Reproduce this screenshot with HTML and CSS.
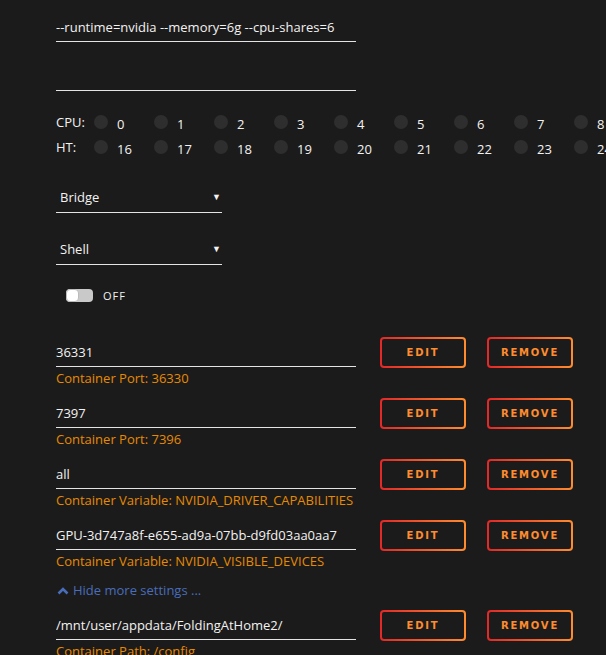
FILE: index.html
```html
<!DOCTYPE html>
<html lang="en">
<head>
    <meta charset="UTF-8">
    <meta name="viewport" content="width=device-width, initial-scale=1.0">
    <title>Edit Container</title>
    <link rel="stylesheet" href="styles.css">
</head>
<body>
    <div class="form">
        <input class="field" type="text" value="--runtime=nvidia --memory=6g --cpu-shares=6">
        <input class="field blank" type="text" value="">

        <div class="cpus">
            <div class="cpu-row">
                <span class="cpu-label">CPU:</span>
                <span class="core"><i></i>0</span>
                <span class="core"><i></i>1</span>
                <span class="core"><i></i>2</span>
                <span class="core"><i></i>3</span>
                <span class="core"><i></i>4</span>
                <span class="core"><i></i>5</span>
                <span class="core"><i></i>6</span>
                <span class="core"><i></i>7</span>
                <span class="core"><i></i>8</span>
            </div>
            <div class="cpu-row">
                <span class="cpu-label">HT:</span>
                <span class="core"><i></i>16</span>
                <span class="core"><i></i>17</span>
                <span class="core"><i></i>18</span>
                <span class="core"><i></i>19</span>
                <span class="core"><i></i>20</span>
                <span class="core"><i></i>21</span>
                <span class="core"><i></i>22</span>
                <span class="core"><i></i>23</span>
                <span class="core"><i></i>24</span>
            </div>
        </div>

        <div class="select network">Bridge<span class="arrow">&#9660;</span></div>
        <div class="select shell">Shell<span class="arrow">&#9660;</span></div>

        <div class="switch">
            <span class="track"><span class="knob"></span></span>
            <span class="switch-text">OFF</span>
        </div>

        <div class="config">
            <div class="config-field">
                <input class="field" type="text" value="36331">
                <div class="hint">Container Port: 36330</div>
            </div>
            <button class="btn edit">Edit</button>
            <button class="btn remove">Remove</button>
        </div>
        <div class="config">
            <div class="config-field">
                <input class="field" type="text" value="7397">
                <div class="hint">Container Port: 7396</div>
            </div>
            <button class="btn edit">Edit</button>
            <button class="btn remove">Remove</button>
        </div>
        <div class="config">
            <div class="config-field">
                <input class="field" type="text" value="all">
                <div class="hint">Container Variable: NVIDIA_DRIVER_CAPABILITIES</div>
            </div>
            <button class="btn edit">Edit</button>
            <button class="btn remove">Remove</button>
        </div>
        <div class="config">
            <div class="config-field">
                <input class="field" type="text" value="GPU-3d747a8f-e655-ad9a-07bb-d9fd03aa0aa7">
                <div class="hint">Container Variable: NVIDIA_VISIBLE_DEVICES</div>
            </div>
            <button class="btn edit">Edit</button>
            <button class="btn remove">Remove</button>
        </div>

        <a class="more" href="#">
            <svg width="12" height="9" viewBox="0 0 12 9"><path d="M1.5 7.5 L6 3 L10.5 7.5" fill="none" stroke="#486dba" stroke-width="2.6"/></svg>
            Hide more settings ...
        </a>

        <div class="config">
            <div class="config-field">
                <input class="field" type="text" value="/mnt/user/appdata/FoldingAtHome2/">
                <div class="hint">Container Path: /config</div>
            </div>
            <button class="btn edit">Edit</button>
            <button class="btn remove">Remove</button>
        </div>
    </div>
</body>
</html>
```

FILE: styles.css
```css
* {
    margin: 0;
    padding: 0;
    box-sizing: border-box;
}

body {
    background-color: #1c1b1b;
    color: #f2f2f2;
    font-family: "Open Sans", "Noto Sans", sans-serif;
    font-size: 13px;
    overflow: hidden;
}

.form {
    padding: 12px 0 0 56px;
    white-space: nowrap;
}

.field {
    display: block;
    width: 300px;
    height: 30px;
    border: none;
    border-bottom: 1px solid #e4e4e4;
    background: transparent;
    color: #f2f2f2;
    font-family: inherit;
    font-size: 13px;
    outline: none;
}

.blank {
    margin-top: 19px;
}

/* cpu pinning */
.cpus {
    margin-top: 18px;
}

.cpu-row {
    display: flex;
    align-items: center;
    height: 25px;
}

.cpu-label {
    flex-shrink: 0;
    width: 38px;
}

.core {
    display: flex;
    flex-shrink: 0;
    align-items: center;
    width: 60px;
    padding-top: 4px;
}

.core i {
    flex-shrink: 0;
    width: 14px;
    height: 14px;
    border-radius: 50%;
    background-color: #2e2e2e;
    margin: -4px 9px 0 0;
}

/* dropdowns */
.select {
    position: relative;
    width: 166px;
    height: 30px;
    line-height: 29px;
    padding-left: 4px;
    border-bottom: 1px solid #e4e4e4;
}

.network {
    margin-top: 24px;
}

.shell {
    margin-top: 22px;
}

.select .arrow {
    position: absolute;
    right: 1px;
    top: -1px;
    font-size: 9px;
}

/* toggle */
.switch {
    display: flex;
    align-items: center;
    margin: 24px 0 0 10px;
    height: 13px;
}

.track {
    display: block;
    width: 27px;
    height: 13px;
    border-radius: 4px;
    background-color: #c9c9c9;
}

.knob {
    display: block;
    width: 13px;
    height: 13px;
    border-radius: 4px;
    background-color: #ffffff;
    border: 1px solid #bbbbbb;
}

.switch-text {
    margin-left: 10px;
    font-size: 11px;
    letter-spacing: 1px;
}

/* config rows */
.config {
    display: flex;
    align-items: flex-start;
    margin-top: 11px;
}

.switch + .config {
    margin-top: 35px;
}

.config-field {
    width: 300px;
    height: 50px;
}

.hint {
    margin-top: 2px;
    line-height: 18px;
    color: #e68a00;
}

.btn {
    height: 31px;
    border: 2px solid transparent;
    border-radius: 4px;
    background: linear-gradient(#1c1b1b, #1c1b1b) padding-box,
                linear-gradient(90deg, #e22828, #ff8c2f) border-box;
    color: #ff8c2f;
    font-family: "DejaVu Sans", sans-serif;
    font-size: 10px;
    font-weight: bold;
    letter-spacing: 1.8px;
    text-transform: uppercase;
    cursor: pointer;
}

.edit {
    width: 86px;
    margin-left: 24px;
}

.remove {
    width: 86px;
    margin-left: 21px;
}

.more {
    display: flex;
    align-items: center;
    height: 20px;
    margin-top: 10px;
    color: #486dba;
    text-decoration: none;
}

.more svg {
    margin: 0 4px 0 1px;
}

.more + .config {
    margin-top: 10px;
}
```
